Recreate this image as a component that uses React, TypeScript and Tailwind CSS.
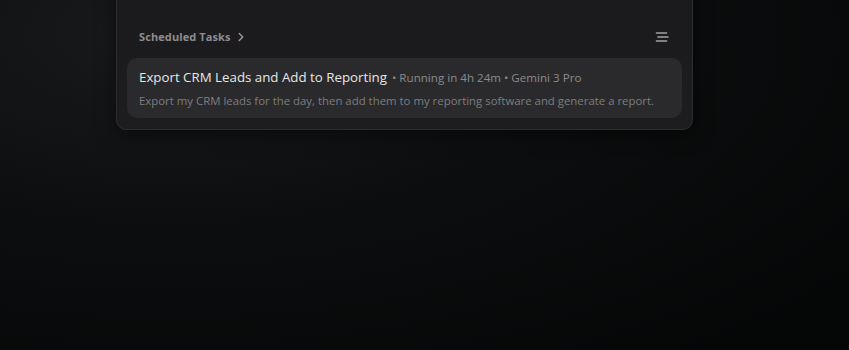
import { ChevronRight } from "lucide-react";

function SortIcon() {
  return (
    <svg width="14" height="12" viewBox="0 0 14 12" fill="none" className="text-[#a3a3a3]">
      <path d="M1.5 2h10" stroke="currentColor" strokeWidth="1.6" strokeLinecap="round" />
      <path d="M3 6h10" stroke="currentColor" strokeWidth="1.6" strokeLinecap="round" />
      <path d="M1.5 10h10" stroke="currentColor" strokeWidth="1.6" strokeLinecap="round" />
    </svg>
  );
}

export default function App() {
  return (
    <div
      className="h-[350px] w-full overflow-hidden bg-[radial-gradient(ellipse_at_20%_10%,#191a1b_0%,#0c0d0e_45%,#040505_100%)]"
      style={{ fontFamily: '"Open Sans", "Noto Sans", sans-serif' }}
    >
      <div className="pl-[116px]">
        <div className="-mt-[30px] w-[577px] rounded-[10px] border border-[#2c2c2e] bg-[linear-gradient(180deg,#1a1a1c_0%,#1d1d1f_100%)] px-[10px] pb-[11px] pt-[58px] shadow-[0_4px_20px_rgba(0,0,0,0.5)]">
          <div className="flex items-center justify-between px-[12px]">
            <button className="flex items-center gap-[3px] text-[11px] font-bold tracking-[0.1px] text-[#8d8d8f]">
              Scheduled Tasks
              <ChevronRight className="size-[14px] text-[#9a9a9c]" strokeWidth={2.5} />
            </button>
            <button className="mr-[1px]">
              <SortIcon />
            </button>
          </div>
          <div className="mt-[12px] rounded-[10px] bg-[#2a2a2c] px-[12px] pb-[8px] pt-[10px]">
            <div className="flex items-baseline gap-[5px] whitespace-nowrap">
              <span className="text-[13.3px] text-[#e6e6e7]">Export CRM Leads and Add to Reporting</span>
              <span className="text-[11.6px] text-[#8a8a8c]">• Running in 4h 24m • Gemini 3 Pro</span>
            </div>
            <p className="mt-[5px] whitespace-nowrap text-[11.4px] text-[#7d7d80]">
              Export my CRM leads for the day, then add them to my reporting software and generate a report.
            </p>
          </div>
        </div>
      </div>
    </div>
  );
}
